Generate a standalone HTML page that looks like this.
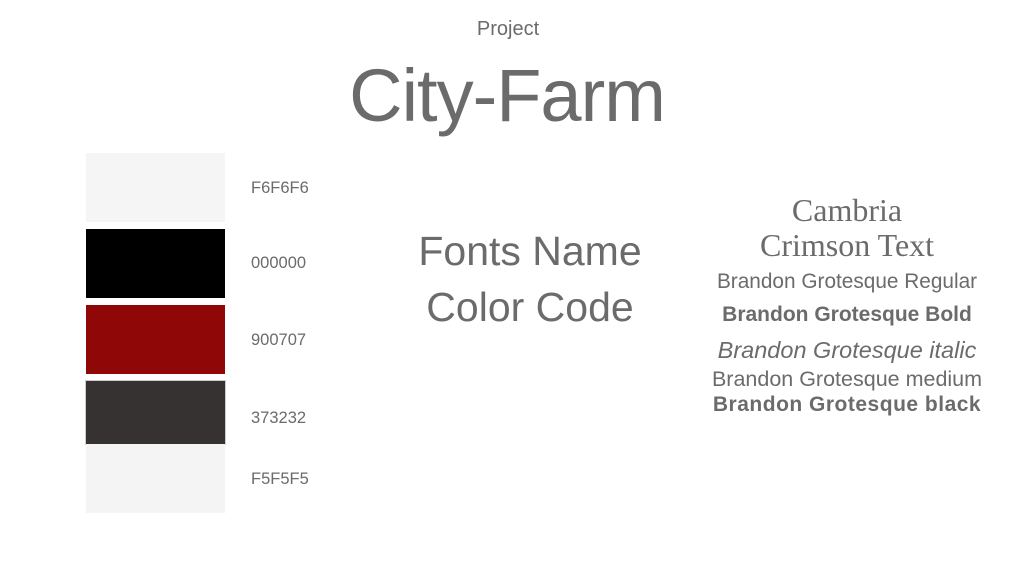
<!DOCTYPE html>
<html><head><meta charset="utf-8"><style>
body{margin:0;width:1018px;height:573px;background:#fff;position:relative;overflow:hidden;font-family:"Liberation Sans",sans-serif;color:#6b6b6b}
.c{position:absolute;white-space:nowrap;transform:translateX(-50%)}
.sw{position:absolute;left:86px;width:139px}
.lb{position:absolute;left:251px;font-size:16.5px;color:#6b6b6b}
</style></head><body>
<div class="c" style="left:508px;top:18px;font-size:20px">Project</div>
<div class="c" style="left:507px;top:53px;font-size:74px;letter-spacing:-1px">City-Farm</div>

<div class="sw" style="top:153px;height:69px;background:#f5f5f5"></div>
<div class="sw" style="top:229px;height:69px;background:#000"></div>
<div class="sw" style="top:305px;height:69px;background:#900707"></div>
<div class="sw" style="top:381px;height:63px;background:#373232;box-shadow:0 0 0 1px #ccc"></div>
<div class="sw" style="top:444px;height:69px;background:#f4f4f4"></div>
<div class="lb" style="top:179px">F6F6F6</div>
<div class="lb" style="top:254px">000000</div>
<div class="lb" style="top:331px">900707</div>
<div class="lb" style="top:409px">373232</div>
<div class="lb" style="top:470px">F5F5F5</div>

<div class="c" style="left:530px;top:228px;font-size:41px">Fonts Name</div>
<div class="c" style="left:530px;top:284px;font-size:41px">Color Code</div>

<div class="c" style="left:847px;top:192px;font-size:32px;font-family:'Liberation Serif',serif">Cambria</div>
<div class="c" style="left:847px;top:227px;font-size:32px;font-family:'Liberation Serif',serif">Crimson Text</div>
<div class="c" style="left:847px;top:270px;font-size:20.8px">Brandon Grotesque Regular</div>
<div class="c" style="left:847px;top:303px;font-size:21px;font-weight:bold">Brandon Grotesque Bold</div>
<div class="c" style="left:847px;top:337px;font-size:23.5px;font-style:italic">Brandon Grotesque italic</div>
<div class="c" style="left:847px;top:367px;font-size:21.5px">Brandon Grotesque medium</div>
<div class="c" style="left:847px;top:393px;font-size:21px;font-weight:bold;letter-spacing:0.5px">Brandon Grotesque black</div>
</body></html>
